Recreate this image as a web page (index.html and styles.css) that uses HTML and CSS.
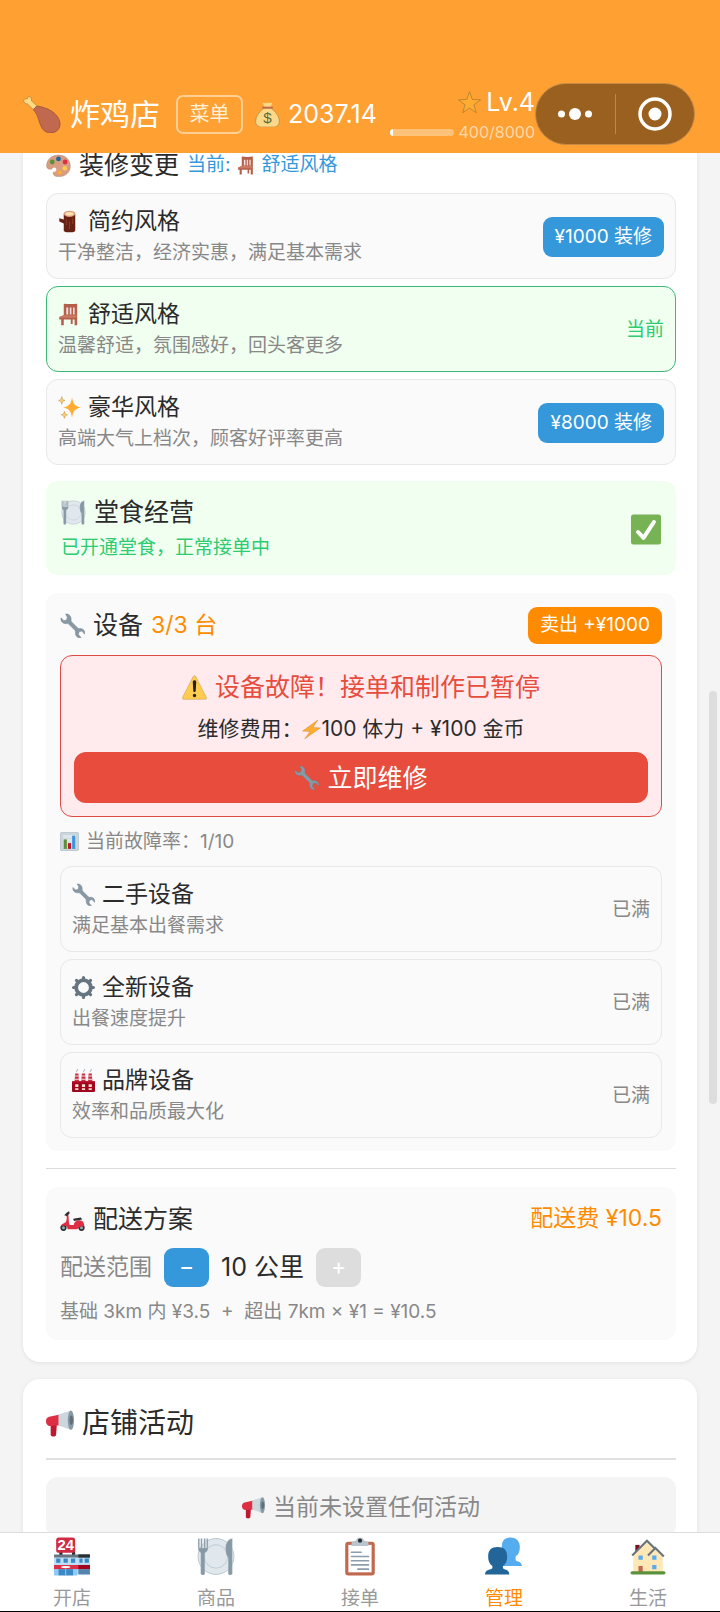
FILE: index.html
```
<!DOCTYPE html>
<html lang="zh-CN">
<head>
  <meta charset="UTF-8">
  <meta name="viewport" content="width=device-width, initial-scale=1">
  <title>炸鸡店</title>
  <link rel="stylesheet" href="styles.css">
</head>
<body>
  <svg class="sprite" aria-hidden="true">
    <symbol id="i-chicken" viewBox="0 0 36 36">
      <path d="M4.200 8.500L10 14l3.500-3.500-5.500-5C8.500 2 6 .5 4.500 2.200 4.200 3 4.300 3.600 4.300 3.600 2 3 0 4.500.8 6.200 1.500 8 3 8.500 4.200 8.500z" fill="#ffd983" stroke="#a57a35" stroke-width=".6"/>
      <path d="M10 14c1-2 2-3 4-3.500 7 1.500 13 3.500 17.500 8.500 5 6 4.500 12 .5 15-5 3.500-11 2-14-2.500-3-5-3.500-13-8-17.500z" fill="#c1694f" stroke="#8a4b38" stroke-width=".6"/>
    </symbol>
    <symbol id="i-money" viewBox="0 0 36 36">
      <path d="M13 9h10c7 5 12 12 12 19 0 6-5 8-8 8H9c-3 0-8-2-8-8C1 21 6 14 13 9z" fill="#fdd888" stroke="#8c7138" stroke-width=".7"/>
      <path d="M11 1c3 1.500 4-.5 7 .5 3-1 4 1 7-.5l-2.500 6h-9z" fill="#fdd888"/>
      <rect x="10" y="7" width="16" height="2.500" rx="1.200" fill="#bf6952"/>
      <text x="18" y="30" text-anchor="middle" font-size="22" font-family="Liberation Sans" fill="#5c6b3c">$</text>
    </symbol>
    <symbol id="i-star" viewBox="0 0 36 36">
      <path d="M18 1l4.300 12.300 13 .5-10.400 7.700L28.600 34 18 26.700 7.400 34l3.700-12.500L.7 13.800l13-.5z" fill="#ffac33" stroke="#9a762c" stroke-width="1"/>
    </symbol>
    <symbol id="i-palette" viewBox="0 0 36 36">
      <path d="M18 3C7 3 0 11 1 20c1 3 4 4 7 3 4-2 5 1 3 4-2 4 1 7 7 7 10 0 17-6 17-15S28 3 18 3z" fill="#d99e82" stroke="#a87a64" stroke-width=".6"/>
      <circle cx="9" cy="13" r="3.500" fill="#5c913b"/><circle cx="18" cy="8.500" r="3.500" fill="#226699"/>
      <circle cx="27.500" cy="13" r="3.500" fill="#dd2e44"/><circle cx="27" cy="22" r="3.300" fill="#ffcc4d"/><circle cx="20" cy="28" r="3" fill="#ffac33"/>
      <circle cx="12" cy="24" r="3" fill="#fff"/>
    </symbol>
    <symbol id="i-chair" viewBox="0 0 36 36">
      <path d="M9 1c7 1 14 1 21 0v34h-4V26h-3v7h-3v-7H9v9H5V26H2v-4l7-3z" fill="#b55f4b"/>
      <path d="M13 7h3v11h-3zM18.500 7H21v11h-2.500zM23.500 7H26v11h-2.500z" fill="#efe2dc"/>
      <path d="M2 22l7-3h21l-2 4H2z" fill="#cb7b62"/>
    </symbol>
    <symbol id="i-wood" viewBox="0 0 36 36">
      <path d="M9 6h18v26c0 4-18 4-18 0V21l-7-3v-5l7 2z" fill="#662113"/>
      <path d="M13 14v10M18 18v12M23 13v9" stroke="#8d3d29" stroke-width="1.500"/>
      <ellipse cx="18" cy="6" rx="9" ry="5" fill="#d99e82"/>
      <ellipse cx="18" cy="6" rx="6.500" ry="3" fill="#ffe0b0"/>
    </symbol>
    <symbol id="i-sparkles" viewBox="0 0 36 36">
      <path d="M22 2c1.500 10 4 14 14 16-10 2-12.500 6-14 16-1.500-10-4-14-14-16 10-2 12.500-6 14-16z" fill="#ffac33"/>
      <path d="M6 1c.8 4 1.500 5 5 6-3.500 1-4.200 2-5 6-.8-4-1.500-5-5-6 3.500-1 4.200-2 5-6zM10 24c.8 3.500 1.500 4.700 5 5.500-3.500.8-4.200 2-5 5.500-.8-3.500-1.500-4.700-5-5.500 3.500-.8 4.200-2 5-5.500z" fill="#ffcc6d" stroke="#a8802f" stroke-width=".7"/>
    </symbol>
    <symbol id="i-plate" viewBox="0 0 36 36">
      <circle cx="18" cy="18" r="17" fill="#e1e8ed" stroke="#aab8c2" stroke-width=".7"/>
      <circle cx="18" cy="18" r="11" fill="none" stroke="#c3d0d9" stroke-width="1"/>
      <path d="M1 1v9c0 3 1.500 4 2.500 4.500V34c0 2 4 2 4 0V14.500C9 14 10.500 13 10.500 10V1H9v9H8V1H6.500v9H5V1H3.500v9h-1V1zM33.500 1C30 1 27 5 27 10c0 5 1 8 2.500 9v15c0 2 4 2 4 0z" fill="#8899a6" stroke="#e1e8ed" stroke-width=".3"/>
    </symbol>
    <symbol id="i-check" viewBox="0 0 36 36">
      <rect width="36" height="36" rx="3" fill="#77b255"/>
      <path d="M8.500 21l6.500 7L27.500 9" fill="none" stroke="#fff" stroke-width="4.800" stroke-linecap="round" stroke-linejoin="round"/>
    </symbol>
    <symbol id="i-wrench" viewBox="0 0 36 36">
      <path d="M8 1.500c3.500-.7 8 2 8 7 0 2-.3 3 .5 4l9 9c1 1 2 .7 4 .7 4.500 0 7 4.300 6 8.300l-4-4.500-4 1-1 4 4 4.500c-5 1-8.300-2.500-8.300-6.500 0-2 .3-3-.7-4l-9-9c-1-1-2-.7-4-.7-5 0-8-4-7-8.300L5.500 11l4-1 1-4z" fill="#8899a6" stroke="#687782" stroke-width=".6"/>
    </symbol>
    <symbol id="i-warning" viewBox="0 0 36 36">
      <path d="M16 2.500c1-2 3-2 4 0L35 32c.8 2 0 3-2 3H3c-2 0-2.800-1-2-3z" fill="#ffcc4d" stroke="#ae8a3b" stroke-width=".6"/>
      <path d="M15.500 10c0-3.300 5-3.300 5 0l-.8 13c-.2 2-3.200 2-3.400 0z" fill="#231f20"/><circle cx="18" cy="29.500" r="2.400" fill="#231f20"/>
    </symbol>
    <symbol id="i-bolt" viewBox="0 0 36 36">
      <path d="M30 0L1 21l14 1L5 36l30-21-14-1z" fill="#ffac33" stroke="#b38032" stroke-width=".7"/>
    </symbol>
    <symbol id="i-chart" viewBox="0 0 36 36">
      <rect x=".5" y=".5" width="35" height="35" rx="4" fill="#ccd6dd" stroke="#9aa9b4"/>
      <path d="M5 5h26v26H5zM5 12h26M5 19h26M5 26h26" fill="#e1e8ed" stroke="#c1ced7"/>
      <path d="M7 14h6v18H7z" fill="#5c913b"/><path d="M15 21h6v11h-6z" fill="#be1931"/><path d="M23 7h6v25h-6z" fill="#3b94d9"/>
    </symbol>
    <symbol id="i-gear" viewBox="0 0 36 36">
      <circle cx="18" cy="18" r="11.500" fill="none" stroke="#66757f" stroke-width="6"/>
      <path d="M18 2.500v4M18 29.500v4M2.500 18h4M29.500 18h4M7 7l3 3M26 26l3 3M29 7l-3 3M10 26l-3 3" stroke="#66757f" stroke-width="5" stroke-linecap="round"/>
    </symbol>
    <symbol id="i-factory" viewBox="0 0 36 36">
      <path d="M5 7h5l1 13H4zM15.500 7h5l1 13h-7zM26 7h5l1 13h-7z" fill="#c92b3f"/>
      <path d="M4.500 11h6M15 11h6M25.500 11h6M4 16h7M14.500 16h7M25 16h7" stroke="#f3e4e5" stroke-width="1.600"/>
      <path d="M7 5c-1-2 2-2 2-5M18 5c-1-2 2-2 2-5M28.500 5c-1-2 2-2 2-5" fill="none" stroke="#b8c1c8" stroke-width="1.800"/>
      <rect y="19" width="36" height="17" rx="2" fill="#a0041e"/><path d="M0 20h36" stroke="#be1931" stroke-width="2"/>
      <path d="M5 24h5v4H5zM15.500 24h5v4h-5zM26 24h5v4h-5zM5 30h5v3H5zM15.500 30h5v3h-5zM26 30h5v3h-5z" fill="#ffdfce"/>
    </symbol>
    <symbol id="i-scooter" viewBox="0 0 36 36">
      <circle cx="5" cy="30" r="4.500" fill="#292f33"/><circle cx="31" cy="30" r="4.500" fill="#292f33"/>
      <circle cx="5" cy="30" r="2.200" fill="#99aab5"/><circle cx="31" cy="30" r="2.200" fill="#99aab5"/>
      <path d="M9 11l3-1c1 7 0 12 2 16h6c0-4 3-7 8-7 5 0 7 4 7 9-8-2-8 4-11 4H11c0-5-5-7-10-4 1-5 7-4 8-8 1-3 1-5 0-9z" fill="#dd2e44"/>
      <path d="M19 17l11-2 2 3-12 2zM6 12l4-4 3-2 1 3-4 4z" fill="#292f33"/>
    </symbol>
    <symbol id="i-megaphone" viewBox="0 0 36 36">
      <path d="M6 19h8l-1 14c0 3-7 3-7 0z" fill="#be1931"/>
      <path d="M4 10l14-3v14L6 22c-3 0-6-2-6-6 0-3 1-5 4-6z" fill="#dd2e44"/>
      <path d="M16 7L32 2v25l-16-6z" fill="#ccd6dd"/>
      <ellipse cx="32" cy="14.500" rx="4" ry="12.500" fill="#8899a6"/><ellipse cx="32.500" cy="14.500" rx="2.200" ry="6" fill="#5f707c"/>
    </symbol>
    <symbol id="i-store" viewBox="0 0 36 36">
      <path d="M6 13h3v5H6zM18 13h3v5h-3z" fill="#292f33"/>
      <path d="M1 17h34v18H1z" fill="#bddff5"/><path d="M1 16h34v3H1z" fill="#66757f"/><path d="M24 16h11v3H24z" fill="#292f33"/>
      <path d="M3 20h4v4H3zM10 20h4v4h-4zM17 20h4v4h-4zM25 20h3v4h-3zM30 20h4v4h-4z" fill="#3b88c3"/>
      <path d="M1 26h34v4H1z" fill="#dd2e44"/><path d="M24 26h11v4H24z" fill="#a0041e"/>
      <path d="M5 30h14v6H5z" fill="#3b88c3"/><path d="M1 30h4v6H1zM19 30h4v6h-4z" fill="#8ccaf7"/><path d="M24 30h11v5H24z" fill="#5584ae"/>
      <path d="M12 30v6" stroke="#8ccaf7"/><ellipse cx="12" cy="28" rx="4.500" ry="1.100" fill="#fff"/>
      <rect x="3" y="0" width="18" height="14.500" rx="2.500" fill="#cf2c43"/>
      <text x="12" y="12" text-anchor="middle" font-size="14" font-weight="700" font-family="Liberation Sans" fill="#fff">24</text>
    </symbol>
    <symbol id="i-clipboard" viewBox="0 0 36 36">
      <rect x="4" y="4" width="28" height="32" rx="3" fill="#c1694f"/><path d="M7 7h22v26H7z" fill="#fff"/>
      <path d="M10 8V5c0-1 2-2 4-2 1-4 7-4 8 0 2 0 4 1 4 2v3z" fill="#b8c5ce"/><circle cx="18" cy="3" r="2" fill="#292f33"/>
      <path d="M10 14h9M10 18h16M10 22h16M10 26h16M16 30h10" stroke="#8c9dad" stroke-width="1.600" stroke-linecap="round"/>
    </symbol>
    <symbol id="i-people" viewBox="0 0 36 36">
      <path d="M16 8c0-5 3-8 8-8s9 3 9 9c0 4-1 7-4 9v3c0 2 6 1 6 6H15z" fill="#55acee"/>
      <path d="M3 18c0-6 3-9 9-9s9 3 9 9c0 4-1 7-4 9v2c1 2 6 1 6 6H0c0-5 6-4 7-6v-2c-3-2-4-5-4-9z" fill="#226699"/>
    </symbol>
    <symbol id="i-house" viewBox="0 0 36 36">
      <path d="M6 7h4v9H6z" fill="#77101f"/>
      <path d="M4 16L17 3l15 14v16H4z" fill="#ffe8b6"/>
      <path d="M3 17L17 3l8 8M18 17l7-7 8 8" fill="none" stroke="#66757f" stroke-width="2"/>
      <path d="M9 17h4v4H9zM22 17h4v4h-4zM22 26h4v4h-4z" fill="#55acee"/><path d="M9 27h4v6H9z" fill="#c1694f"/>
      <path d="M3 32h30c2 0 2 3 0 3H3c-2 0-2-3 0-3z" fill="#5c913b"/>
    </symbol>
  </svg>

  <header class="header">
    <svg class="icon icon--xl"><use href="#i-chicken"/></svg>
    <h1 class="header__title">炸鸡店</h1>
    <button class="header__menu" type="button">菜单</button>
    <div class="header__money">
      <svg class="icon icon--lg"><use href="#i-money"/></svg>
      <span>2037.14</span>
    </div>
    <div class="level">
      <div class="level__name"><svg class="icon"><use href="#i-star"/></svg>Lv.4</div>
      <div class="level__exp">
        <div class="level__bar"><div class="level__fill" style="width: 5%"></div></div>
        <span>400/8000</span>
      </div>
    </div>
    <div class="capsule">
      <button class="capsule__button" type="button" aria-label="更多">
        <svg width="34" height="14" viewBox="0 0 34 14" fill="#fff"><circle cx="3.500" cy="7" r="3.500"/><circle cx="17" cy="7" r="6"/><circle cx="30.500" cy="7" r="3.500"/></svg>
      </button>
      <button class="capsule__button" type="button" aria-label="关闭">
        <svg width="34" height="34" viewBox="0 0 34 34"><circle cx="17" cy="17" r="15" fill="none" stroke="#fff" stroke-width="3.500"/><circle cx="17" cy="17" r="6.500" fill="#fff"/></svg>
      </button>
    </div>
  </header>

  <main class="content">
    <section class="card">
      <h2 class="title title--top">
        <svg class="icon icon--lg"><use href="#i-palette"/></svg>装修变更
        <span class="title__current">当前: <svg class="icon icon--sm"><use href="#i-chair"/></svg> 舒适风格</span>
      </h2>
      <ul class="options">
        <li class="option">
          <div>
            <h3 class="option__name"><svg class="icon"><use href="#i-wood"/></svg>简约风格</h3>
            <p class="option__text">干净整洁，经济实惠，满足基本需求</p>
          </div>
          <button class="button" type="button">¥1000 装修</button>
        </li>
        <li class="option option--active">
          <div>
            <h3 class="option__name"><svg class="icon"><use href="#i-chair"/></svg>舒适风格</h3>
            <p class="option__text">温馨舒适，氛围感好，回头客更多</p>
          </div>
          <span class="option__state">当前</span>
        </li>
        <li class="option">
          <div>
            <h3 class="option__name"><svg class="icon"><use href="#i-sparkles"/></svg>豪华风格</h3>
            <p class="option__text">高端大气上档次，顾客好评率更高</p>
          </div>
          <button class="button" type="button">¥8000 装修</button>
        </li>
      </ul>

      <div class="block block--green">
        <div>
          <h2 class="title"><svg class="icon icon--lg"><use href="#i-plate"/></svg>堂食经营</h2>
          <p class="block__text">已开通堂食，正常接单中</p>
        </div>
        <svg class="icon icon--check"><use href="#i-check"/></svg>
      </div>

      <div class="block">
        <div class="block__head">
          <h2 class="title"><svg class="icon icon--lg"><use href="#i-wrench"/></svg>设备 <span class="title__count">3/3 台</span></h2>
          <button class="button button--orange" type="button">卖出 +¥1000</button>
        </div>
        <div class="alert">
          <p class="alert__title"><svg class="icon icon--lg"><use href="#i-warning"/></svg>设备故障！接单和制作已暂停</p>
          <p class="alert__cost">维修费用：<svg class="icon icon--sm"><use href="#i-bolt"/></svg>100 体力 + ¥100 金币</p>
          <button class="alert__button" type="button"><svg class="icon icon--lg"><use href="#i-wrench"/></svg>立即维修</button>
        </div>
        <p class="rate"><svg class="icon icon--sm"><use href="#i-chart"/></svg>当前故障率：1/10</p>
        <ul class="options">
          <li class="option">
            <div>
              <h3 class="option__name"><svg class="icon"><use href="#i-wrench"/></svg>二手设备</h3>
              <p class="option__text">满足基本出餐需求</p>
            </div>
            <span class="option__state">已满</span>
          </li>
          <li class="option">
            <div>
              <h3 class="option__name"><svg class="icon"><use href="#i-gear"/></svg>全新设备</h3>
              <p class="option__text">出餐速度提升</p>
            </div>
            <span class="option__state">已满</span>
          </li>
          <li class="option">
            <div>
              <h3 class="option__name"><svg class="icon"><use href="#i-factory"/></svg>品牌设备</h3>
              <p class="option__text">效率和品质最大化</p>
            </div>
            <span class="option__state">已满</span>
          </li>
        </ul>
      </div>

      <hr class="divider">

      <div class="block">
        <div class="block__head">
          <h2 class="title"><svg class="icon icon--lg"><use href="#i-scooter"/></svg>配送方案</h2>
          <span class="fee">配送费 ¥10.5</span>
        </div>
        <div class="range">
          <span class="range__label">配送范围</span>
          <button class="range__button" type="button" aria-label="减少">−</button>
          <span class="range__value">10 公里</span>
          <button class="range__button" type="button" aria-label="增加" disabled>+</button>
        </div>
        <p class="formula">基础 3km 内 ¥3.5 &nbsp;+&nbsp; 超出 7km × ¥1 = ¥10.5</p>
      </div>
    </section>

    <section class="card">
      <h2 class="title title--card"><svg class="icon icon--event"><use href="#i-megaphone"/></svg>店铺活动</h2>
      <p class="empty"><svg class="icon"><use href="#i-megaphone"/></svg>当前未设置任何活动</p>
    </section>
    <div class="scrollbar"></div>
  </main>

  <nav class="tabs">
    <a class="tab" href="#shop"><svg class="icon icon--tab"><use href="#i-store"/></svg>开店</a>
    <a class="tab" href="#goods"><svg class="icon icon--tab"><use href="#i-plate"/></svg>商品</a>
    <a class="tab" href="#orders"><svg class="icon icon--tab"><use href="#i-clipboard"/></svg>接单</a>
    <a class="tab tab--active" href="#manage"><svg class="icon icon--tab"><use href="#i-people"/></svg>管理</a>
    <a class="tab" href="#life"><svg class="icon icon--tab"><use href="#i-house"/></svg>生活</a>
  </nav>
</body>
</html>
```
FILE: styles.css
```
* {
  box-sizing: border-box;
}

body {
  display: flex;
  flex-direction: column;
  height: 100vh;
  margin: 0;
  background-color: #f4f4f4;
  color: #2b2b2b;
  font-family: Inter, "Noto Sans CJK SC", sans-serif;
  font-size: 19px;
  line-height: 1.2;
}

h1,
h2,
h3,
p,
ul {
  margin: 0;
  padding: 0;
  font-weight: inherit;
  list-style: none;
}

button {
  padding: 0;
  border: 0;
  color: #fff;
  font: inherit;
  white-space: nowrap;
}

.sprite {
  display: none;
}

.icon {
  flex: none;
  width: 23px;
  height: 23px;
}

.icon--sm {
  width: 19px;
  height: 19px;
}

.icon--lg {
  width: 25px;
  height: 25px;
}

.icon--event {
  width: 28px;
  height: 28px;
}

.icon--check {
  width: 30px;
  height: 31px;
}

.icon--xl {
  width: 38px;
  height: 38px;
}

.icon--tab {
  width: 38px;
  height: 39px;
}

/* header */

.header {
  position: relative;
  z-index: 1;
  display: flex;
  flex: none;
  align-items: center;
  height: 153px;
  padding: 75px 25px 0 23px;
  background-color: #ffa033;
  color: #fff;
  white-space: nowrap;
}

.header__title {
  margin: 0 16px 0 9px;
  font-size: 30px;
}

.header__menu {
  width: 67px;
  height: 39px;
  margin-right: 12px;
  border: 2px solid #ffcf94;
  border-radius: 7px;
  background-color: transparent;
  color: #fff2d9;
  font-size: 20px;
}

.header__money {
  display: flex;
  gap: 8px;
  align-items: center;
  font-size: 25px;
}

.level {
  margin-top: 4px;
  margin-left: auto;
}

.level__name {
  display: flex;
  gap: 5px;
  align-items: center;
  justify-content: flex-end;
  font-size: 25px;
  line-height: 32px;
}

.level__exp {
  display: flex;
  gap: 5px;
  align-items: center;
  color: #ffd9a8;
  font-size: 16px;
  line-height: 28px;
}

.level__bar {
  width: 64px;
  height: 7px;
  border-radius: 4px;
  background-color: #ffc27a;
  overflow: hidden;
}

.level__fill {
  height: 100%;
  background-color: #fff;
}

.capsule {
  display: flex;
  align-items: center;
  width: 160px;
  height: 62px;
  border: 1px solid #c68a45;
  border-radius: 31px;
  background-color: #99601f;
}

.capsule__button {
  display: flex;
  flex: 1;
  align-items: center;
  justify-content: center;
  height: 40px;
  background-color: transparent;
}

.capsule__button + .capsule__button {
  border-left: 1px solid #b98a55;
}

/* content */

.content {
  position: relative;
  flex: 1;
  min-height: 0;
  padding: 0 23px;
  overflow: hidden;
}

.card {
  margin-bottom: 17px;
  padding: 22px 21px 22px 23px;
  border-radius: 17px;
  background-color: #fff;
  box-shadow: 0 1px 4px rgba(0, 0, 0, 0.08);
}

/* the list is scrolled, the first card starts under the header */
.card:first-child {
  margin-top: -29px;
}

.title {
  display: flex;
  gap: 8px;
  align-items: center;
  font-size: 25px;
  line-height: 38px;
}

.title--top {
  margin-bottom: 9px;
}

.title--card {
  padding-bottom: 13px;
  border-bottom: 2px solid #e0e0e0;
  font-size: 28px;
  line-height: 44px;
}

.title__current {
  display: flex;
  gap: 6px;
  align-items: center;
  color: #3498db;
  font-size: 19px;
}

.title__count {
  color: #ff8c00;
  font-size: 23px;
}

.options {
  display: grid;
  gap: 7px;
}

.option {
  display: flex;
  align-items: center;
  justify-content: space-between;
  padding: 11px 11px 9px;
  border: 1px solid #e6e8ea;
  border-radius: 12px;
  background-color: #fafafa;
}

.option__name {
  display: flex;
  gap: 7px;
  align-items: center;
  font-size: 23px;
  line-height: 32px;
}

.option__text {
  color: #888;
  line-height: 32px;
}

.option__state {
  color: #888;
}

.option--active {
  border-color: #3cb878;
  background-color: #f0fff0;
}

.option--active .option__state {
  color: #2ecc71;
}

.button {
  height: 40px;
  padding: 0 12px;
  border-radius: 9px;
  background-color: #3498db;
}

.button--orange {
  height: 37px;
  background-color: #ff8c00;
}

.block {
  margin-top: 18px;
  padding: 13px 14px;
  border-radius: 12px;
  background-color: #fafafa;
}

.block--green {
  display: flex;
  align-items: center;
  justify-content: space-between;
  margin-top: 16px;
  padding: 12px 15px 10px;
  background-color: #f0fff0;
}

.block__text {
  color: #2ecc71;
  line-height: 34px;
}

.block__head {
  display: flex;
  align-items: center;
  justify-content: space-between;
}

.alert {
  display: grid;
  margin-top: 11px;
  padding: 13px;
  border: 1px solid #dc4c45;
  border-radius: 12px;
  background-color: #ffebee;
}

.alert__title,
.alert__cost,
.alert__button,
.empty {
  display: flex;
  gap: 8px;
  align-items: center;
  justify-content: center;
}

.alert__title {
  color: #e74c3c;
  font-size: 25px;
  line-height: 37px;
}

.alert__cost {
  gap: 0;
  font-size: 21px;
  line-height: 46px;
}

.alert__button {
  height: 51px;
  border-radius: 12px;
  background-color: #e74c3c;
  font-size: 25px;
}

.rate {
  display: flex;
  gap: 7px;
  align-items: center;
  color: #888;
  line-height: 49px;
}

.divider {
  margin: 17px 0 0;
  border: 0;
  border-top: 1px solid #ddd;
}

.fee {
  color: #ff8c00;
  font-size: 23px;
}

.range {
  display: flex;
  gap: 12px;
  align-items: center;
  margin-top: 10px;
  line-height: 39px;
}

.range__label {
  color: #888;
  font-size: 23px;
}

.range__button {
  width: 45px;
  height: 39px;
  border-radius: 9px;
  background-color: #3498db;
  font-size: 23px;
  line-height: 1;
}

.range__button:disabled {
  background-color: #ddd;
}

.range__value {
  font-size: 25px;
}

.formula {
  margin-top: 10px;
  color: #888;
  line-height: 30px;
}

.empty {
  margin-top: 17px;
  padding: 15px;
  border-radius: 12px;
  background-color: #f4f4f4;
  color: #888;
  font-size: 23px;
  line-height: 30px;
}

.scrollbar {
  position: absolute;
  top: 39%;
  right: 3px;
  width: 8px;
  height: 30%;
  border-radius: 4px;
  background-color: #ddd;
}

/* bottom tabs */

.tabs {
  display: grid;
  flex: none;
  grid-template-columns: repeat(5, 1fr);
  padding-top: 4px;
  border-top: 1px solid #ddd;
  border-bottom: 1px solid #000;
  background-color: #fff;
}

.tab {
  display: flex;
  flex-direction: column;
  gap: 10px;
  align-items: center;
  color: #999;
  line-height: 25px;
  text-decoration: none;
}

.tab--active {
  color: #ff8c00;
}
```
